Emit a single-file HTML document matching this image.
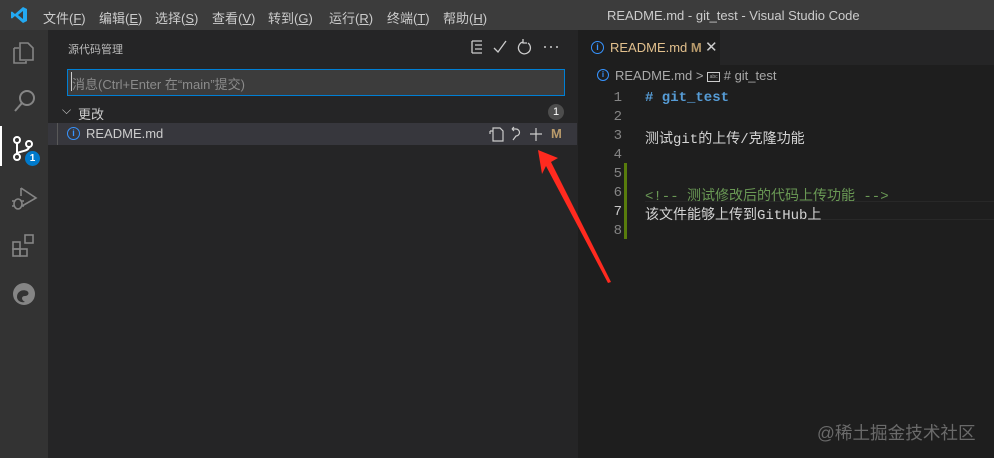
<!DOCTYPE html>
<html><head><meta charset="utf-8"><style>
*{margin:0;padding:0;box-sizing:border-box}
body{width:994px;height:458px;overflow:hidden;background:#1e1e1e;font-family:"Liberation Sans","Noto Sans CJK SC",sans-serif;color:#ccc;position:relative;font-size:13px}
.abs{position:absolute}
.title{left:0;top:0;width:994px;height:30px;background:#3c3c3c}
.menu{top:8px;font-size:13px;color:#ccc}
.act{left:0;top:30px;width:48px;height:428px;background:#333}
.side{left:48px;top:30px;width:530px;height:428px;background:#252526}
.mono{font-family:"Liberation Mono","Noto Sans CJK SC",monospace;font-size:14px}
.ln{left:600px;width:22px;text-align:right;color:#858585}
</style></head><body>
<div class="abs title"></div>
<svg class="abs" style="left:10px;top:6px" width="18" height="18" viewBox="0 0 18 18"><path d="M13 1 L17 3 V15 L13 17 L5 10 L2 12.5 L1 12 V6 L2 5.5 L5 8 Z M13 5 L8 9 L13 13 Z" fill="#23a9f2"/></svg>
<div class="abs menu" style="left:43px">文件(<u>F</u>)</div>
<div class="abs menu" style="left:99px">编辑(<u>E</u>)</div>
<div class="abs menu" style="left:155px">选择(<u>S</u>)</div>
<div class="abs menu" style="left:212px">查看(<u>V</u>)</div>
<div class="abs menu" style="left:268px">转到(<u>G</u>)</div>
<div class="abs menu" style="left:329px">运行(<u>R</u>)</div>
<div class="abs menu" style="left:387px">终端(<u>T</u>)</div>
<div class="abs menu" style="left:443px">帮助(<u>H</u>)</div>
<div class="abs menu" style="left:607px">README.md - git_test - Visual Studio Code</div>

<div class="abs act"></div>
<svg class="abs" style="left:11px;top:40px" width="26" height="26" viewBox="0 0 26 26" fill="none" stroke="#858585" stroke-width="1.6"><path d="M9 3h8l5 5v12H9z M3 8h5 M3 8v15h12v-2"/></svg>
<svg class="abs" style="left:12px;top:88px" width="26" height="26" viewBox="0 0 26 26" fill="none" stroke="#858585" stroke-width="2"><circle cx="15" cy="10" r="7"/><path d="M10 15 L3 23"/></svg>
<div class="abs" style="left:0;top:126px;width:2px;height:40px;background:#fff"></div>
<svg class="abs" style="left:12px;top:136px" width="28" height="30" viewBox="0 0 28 30" fill="none" stroke="#fff" stroke-width="2"><circle cx="5" cy="4" r="3"/><circle cx="5" cy="21" r="3"/><circle cx="17" cy="8" r="3"/><path d="M5 7v11 M17 11c0 5-12 4-12 7"/></svg>
<div class="abs" style="left:25px;top:151px;width:15px;height:15px;border-radius:50%;background:#007acc;color:#fff;font-size:10px;font-weight:bold;text-align:center;line-height:15px">1</div>
<svg class="abs" style="left:10px;top:186px" width="28" height="26" viewBox="0 0 28 26" fill="none" stroke="#858585" stroke-width="1.6"><path d="M11 2 L26 12 L12 20 M11 2v8"/><ellipse cx="8" cy="18" rx="4" ry="5"/><path d="M2 15h3 M2 20h3 M11 15h3 M11 20h3"/></svg>
<svg class="abs" style="left:11px;top:233px" width="26" height="26" viewBox="0 0 26 26" fill="none" stroke="#858585" stroke-width="1.6"><rect x="2" y="9" width="7" height="7"/><rect x="2" y="16" width="7" height="7"/><rect x="9" y="16" width="7" height="7"/><rect x="14" y="2" width="8" height="8"/></svg>
<svg class="abs" style="left:11px;top:281px" width="26" height="26" viewBox="0 0 26 26"><circle cx="13" cy="13" r="11" fill="#858585"/><path d="M6 16c0-6 6-8 10-6 3 2 1 5-2 5-4 0-4 4 0 6-5 1-8-2-8-5z" fill="#333"/></svg>

<div class="abs side"></div>
<div class="abs" style="left:68px;top:41px;font-size:11px;color:#bbb">源代码管理</div>
<svg class="abs" style="left:468px;top:38px" width="96" height="18" viewBox="0 0 96 18" fill="none" stroke="#ccc" stroke-width="1.3"><path d="M4 3h10 M7 7h7 M7 11h7 M4 15h10 M4 3v12"/><path d="M26 10l4 4 8-11"/><path d="M55 4a6 6 0 1 0 5 1 M55 1v4h4" /><circle cx="77" cy="9" r="1" fill="#ccc" stroke="none"/><circle cx="83" cy="9" r="1" fill="#ccc" stroke="none"/><circle cx="89" cy="9" r="1" fill="#ccc" stroke="none"/></svg>
<div class="abs" style="left:67px;top:69px;width:498px;height:27px;border:1px solid #007fd4;background:#3c3c3c"></div>
<div class="abs" style="left:72px;top:74px;font-size:13px;color:#8b8b8b">消息(Ctrl+Enter 在“main”提交)</div>
<div class="abs" style="left:71px;top:72px;width:1px;height:19px;background:#ccc"></div>
<div class="abs" style="left:62px;top:103px;font-size:12px;color:#ccc">⌵</div>
<div class="abs" style="left:78px;top:104px;font-size:13px;color:#ccc">更改</div>
<div class="abs" style="left:548px;top:104px;width:16px;height:16px;border-radius:8px;background:#4d4d4d;color:#fff;font-size:11px;text-align:center;line-height:16px">1</div>
<div class="abs" style="left:48px;top:123px;width:529px;height:22px;background:#37373d"></div>
<div class="abs" style="left:57px;top:123px;width:1px;height:22px;background:#585858"></div>
<div class="abs" style="left:67px;top:127px;width:13px;height:13px;border:1.3px solid #3794ff;border-radius:50%;color:#3794ff;font-size:9px;text-align:center;line-height:11px;font-weight:bold">i</div>
<div class="abs" style="left:86px;top:126px;font-size:13px;color:#ccc">README.md</div>
<svg class="abs" style="left:488px;top:126px" width="80" height="16" viewBox="0 0 80 16" fill="none" stroke="#ccc" stroke-width="1.2"><path d="M5 2h7l3 3v10H5z M2 5h3 M2 5v3"/><path d="M25 3h3a3 3 0 0 1 0 7l-3 4 M24 3l2-2 M24 3l2 2"/><path d="M42 8h12 M48 2v13"/></svg>
<div class="abs" style="left:551px;top:126px;font-size:13px;font-weight:bold;color:#b89a6b">M</div>

<svg class="abs" style="left:520px;top:140px" width="100" height="150" viewBox="0 0 100 150"><path d="M18 10 L38 18 L31 22 L91 142 L88 143 L26 26 L22 34 Z" fill="#ff2a1f"/></svg>

<div class="abs" style="left:720px;top:30px;width:274px;height:35px;background:#252526"></div>
<div class="abs" style="left:591px;top:41px;width:13px;height:13px;border:1.3px solid #3794ff;border-radius:50%;color:#3794ff;font-size:9px;text-align:center;line-height:11px;font-weight:bold">i</div>
<div class="abs" style="left:610px;top:40px;font-size:13px;color:#e2c08d">README.md <b style="color:#b89a6b">M</b></div>
<div class="abs" style="left:705px;top:38px;font-size:15px;color:#ccc">✕</div>
<div class="abs" style="left:597px;top:69px;width:12px;height:12px;border:1.2px solid #3794ff;border-radius:50%;color:#3794ff;font-size:8px;text-align:center;line-height:10px;font-weight:bold">i</div>
<div class="abs" style="left:615px;top:68px;font-size:13px;color:#a9a9a9">README.md &gt; <span style="display:inline-block;width:13px;height:10px;border:1px solid #ccc;font-size:5px;vertical-align:middle;text-align:center;line-height:8px">abc</span> # git_test</div>

<div class="abs mono ln" style="top:90px">1</div>
<div class="abs mono ln" style="top:109px">2</div>
<div class="abs mono ln" style="top:128px">3</div>
<div class="abs mono ln" style="top:147px">4</div>
<div class="abs mono ln" style="top:166px">5</div>
<div class="abs mono ln" style="top:185px">6</div>
<div class="abs mono ln" style="top:204px;color:#c6c6c6">7</div>
<div class="abs mono ln" style="top:223px">8</div>
<div class="abs" style="left:624px;top:163px;width:3px;height:76px;background:#587c0c"></div>
<div class="abs" style="left:645px;top:201px;width:349px;height:19px;border-top:1px solid #282828;border-bottom:1px solid #282828"></div>
<div class="abs mono" style="left:645px;top:90px;color:#569cd6;font-weight:bold"># git_test</div>
<div class="abs mono" style="left:645px;top:128px;color:#d4d4d4">测试git的上传/克隆功能</div>
<div class="abs mono" style="left:645px;top:185px;color:#6a9955">&lt;!-- 测试修改后的代码上传功能 --&gt;</div>
<div class="abs mono" style="left:645px;top:204px;color:#d4d4d4">该文件能够上传到GitHub上</div>

<div class="abs" style="left:817px;top:420px;font-size:17.6px;color:#6a6a6a">@稀土掘金技术社区</div>
</body></html>
